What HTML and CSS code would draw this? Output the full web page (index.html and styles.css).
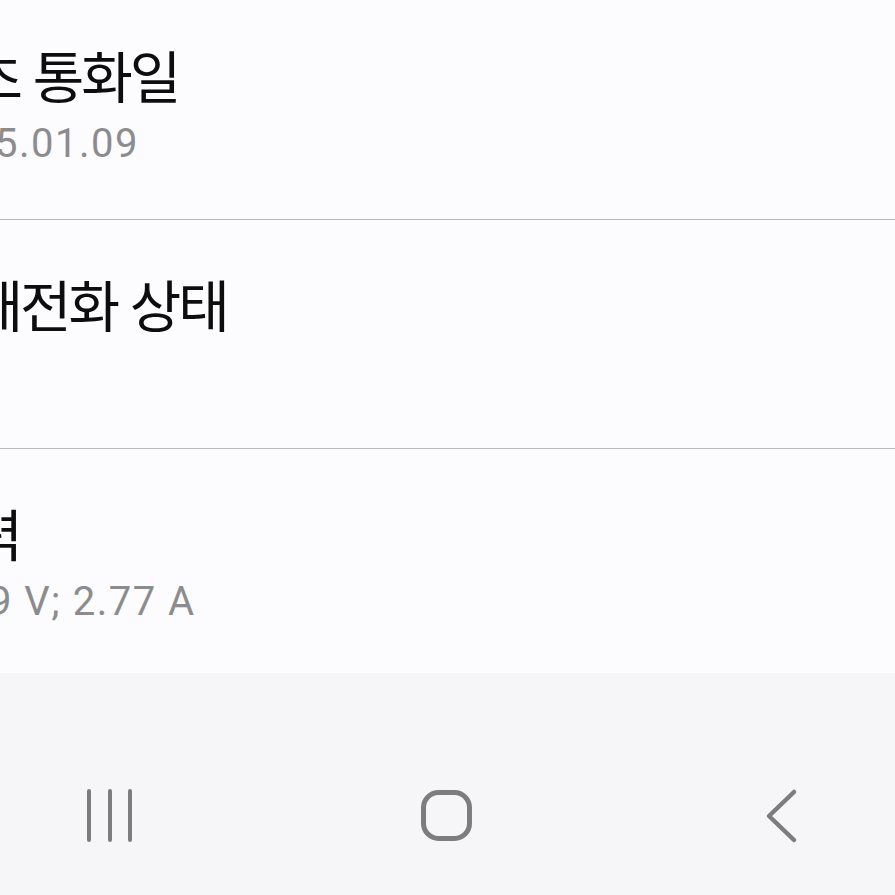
FILE: index.html
```html
<!DOCTYPE html>
<html lang="ko">
<head>
    <meta charset="UTF-8">
    <meta name="viewport" content="width=device-width, initial-scale=1.0">
    <title>휴대전화 정보</title>
    <link rel="stylesheet" href="styles.css">
</head>
<body>

    <!-- Settings List -->
    <main class="settings-list">
        <div class="setting-item">
            <h2>최초 통화일</h2>
            <p>2025.01.09</p>
        </div>
        <div class="setting-item">
            <h2>콜재전화 상태</h2>
            <p></p>
        </div>
        <div class="setting-item">
            <h2>입력</h2>
            <p>PD 9 V; 2.77 A</p>
        </div>
    </main>

    <!-- Navigation Bar -->
    <nav class="nav-bar">
        <button class="nav-btn" aria-label="최근 앱">
            <svg width="60" height="60" viewBox="0 0 60 60">
                <path d="M9 6v49M30 6v49M50 6v49" stroke="#7d7d7f" stroke-width="4" stroke-linecap="round" fill="none"/>
            </svg>
        </button>
        <button class="nav-btn" aria-label="홈">
            <svg width="60" height="60" viewBox="0 0 60 60">
                <rect x="7.5" y="7.5" width="46" height="46" rx="15" stroke="#7d7d7f" stroke-width="5" fill="none"/>
            </svg>
        </button>
        <button class="nav-btn" aria-label="뒤로">
            <svg width="60" height="60" viewBox="0 0 60 60">
                <path d="M43 7L18 31L43 55" stroke="#7d7d7f" stroke-width="4.5" stroke-linecap="round" stroke-linejoin="round" fill="none"/>
            </svg>
        </button>
    </nav>

</body>
</html>
```

FILE: styles.css
```css
/* Basic Styles */
body {
    font-family: "Noto Sans CJK KR", Roboto, sans-serif;
    margin: 0;
    padding: 0;
    background-color: #fcfcfe;
    height: 895px;
    overflow: hidden;
    display: flex;
    flex-direction: column;
}

/* Settings List */
.settings-list {
    flex: 1;
    min-height: 0;
    overflow: hidden;
    margin: -9px 0 0 -77px;
}

.setting-item {
    padding-top: 49px;
    height: 179px;
    border-bottom: 1px solid #b9b9bb;
}

.setting-item h2 {
    margin: 0 0 8px;
    font-size: 56px;
    font-weight: 400;
    line-height: 68px;
    letter-spacing: -3px;
    color: #0d0d0d;
    white-space: nowrap;
}

.setting-item p {
    margin: 0;
    font-family: Roboto, "Noto Sans CJK KR", sans-serif;
    font-size: 40px;
    line-height: 56px;
    letter-spacing: 1.5px;
    color: #8c8c8e;
    white-space: nowrap;
}

/* Navigation Bar */
.nav-bar {
    height: 222px;
    flex-shrink: 0;
    background-color: #f6f6f8;
    display: flex;
    justify-content: space-between;
    align-items: flex-start;
    padding: 112px 84px 0 80px;
    box-sizing: border-box;
}

.nav-btn {
    width: 60px;
    height: 60px;
    padding: 0;
    border: none;
    background: none;
    cursor: pointer;
}

.nav-btn svg {
    display: block;
}
```
